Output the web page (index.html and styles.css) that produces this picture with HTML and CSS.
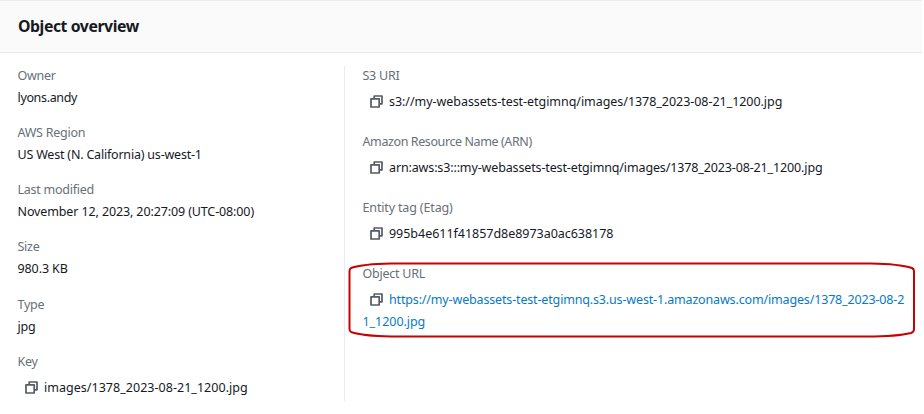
FILE: index.html
```html
<!DOCTYPE html>
<html lang="en">
<head>
<meta charset="utf-8">
<title>Object overview</title>
<link rel="stylesheet" href="styles.css">
</head>
<body>
<svg class="defs" aria-hidden="true">
  <symbol id="copy" viewBox="0 0 13 13">
    <path d="M4.2 3.8V1H12v7.8H9.2M1 3.8h8.2V12H1z"/>
  </symbol>
</svg>
<section class="panel">
  <header class="panel-header"><h2>Object overview</h2></header>
  <div class="columns">
    <dl class="column summary">
      <div class="field"><dt>Owner</dt><dd><span class="owner">lyons.andy</span></dd></div>
      <div class="field"><dt>AWS Region</dt><dd><span class="region">US West (N. California) us-west-1</span></dd></div>
      <div class="field"><dt>Last modified</dt><dd><span class="date">November 12, 2023, 20:27:09 (UTC-08:00)</span></dd></div>
      <div class="field"><dt>Size</dt><dd><span class="size">980.3 KB</span></dd></div>
      <div class="field"><dt>Type</dt><dd><span class="region">jpg</span></dd></div>
      <div class="field copyable"><dt>Key</dt><dd><svg class="icon"><use href="#copy"/></svg><span class="key">images/1378_2023-08-21_1200.jpg</span></dd></div>
    </dl>
    <dl class="column identifiers">
      <div class="field copyable"><dt>S3 URI</dt><dd><svg class="icon"><use href="#copy"/></svg><span class="uri">s3://my-webassets-test-etgimnq/images/1378_2023-08-21_1200.jpg</span></dd></div>
      <div class="field copyable"><dt class="arn-label">Amazon Resource Name (ARN)</dt><dd><svg class="icon"><use href="#copy"/></svg><span class="arn">arn:aws:s3:::my-webassets-test-etgimnq/images/1378_2023-08-21_1200.jpg</span></dd></div>
      <div class="field copyable"><dt class="etag-label">Entity tag (Etag)</dt><dd><svg class="icon"><use href="#copy"/></svg><span class="etag">995b4e611f41857d8e8973a0ac638178</span></dd></div>
      <div class="field copyable highlighted"><dt>Object URL</dt><dd><svg class="icon"><use href="#copy"/></svg><a class="link"><span class="url">https://my-webassets-test-etgimnq.s3.us-west-1.amazonaws.com/images/1378_2023-08-2</span><br><span class="url-rest">1_1200.jpg</span></a>
        <svg class="outline" viewBox="0 0 568 76" aria-hidden="true"><path d="M43 1.500H523Q551 2 564 6Q566 7 566 9V67Q566 70 563 71Q549 74.500 519 74.500H43Q15 74 3 70Q1.500 69 1.500 67V9Q1.500 7 3 6Q15 2 43 1.500Z"/></svg></dd></div>
    </dl>
  </div>
</section>
</body>
</html>
```
FILE: styles.css
```css
* { box-sizing: border-box; }
body {
  margin: 0;
  background: #fff;
  color: #16191f;
  font: 12.5px/22px "Noto Sans", "Open Sans", sans-serif;
  white-space: nowrap;
}
h2, dl, dd { margin: 0; }
.defs { display: none; }
.panel { width: 922px; }
.panel-header {
  height: 53px;
  padding: 14px 18px;
  border-top: 1px solid #eaeded;
  border-bottom: 1px solid #eaeded;
  background: #fafafa;
}
h2 { font-size: 15.8px; line-height: 22px; letter-spacing: -0.43px; }
.columns {
  display: grid;
  grid-template-columns: 344px 1fr;
  padding-top: 13px;
}
.column { height: 335px; }
.summary { padding-left: 17.5px; }
.identifiers { padding-left: 17.5px; border-left: 1px solid #eaeded; }
.summary .field { height: 57.15px; }
.identifiers .field { height: 66px; }
.field { position: relative; top: -1px; }
dt { color: #687078; letter-spacing: -0.25px; }
.arn-label { letter-spacing: -0.4px; }
.etag-label { letter-spacing: -0.15px; }
.owner { letter-spacing: -0.35px; }
.region { letter-spacing: -0.2px; }
.size { letter-spacing: -0.1px; }
.date { letter-spacing: -0.12px; }
.key { letter-spacing: 0.03px; }
.uri { letter-spacing: -0.045px; }
.arn { letter-spacing: -0.135px; }
.etag { letter-spacing: -0.03px; }
.url { letter-spacing: -0.155px; }
.url-rest { letter-spacing: -0.05px; }
.copyable dd { padding: 4px 0 0 7px; }
.icon {
  width: 13px;
  height: 13px;
  margin-right: 6.5px;
  vertical-align: -2px;
  fill: none;
  stroke: #545b64;
  stroke-width: 1.7;
  stroke-linejoin: round;
}
.link { color: #077ac4; }
.highlighted dd { text-indent: 7px; padding-left: 0; }
.outline {
  position: absolute;
  left: -14.5px;
  top: -1px;
  width: 568px;
  height: 76px;
  fill: none;
  stroke: #c80000;
  stroke-width: 2;
}
```
